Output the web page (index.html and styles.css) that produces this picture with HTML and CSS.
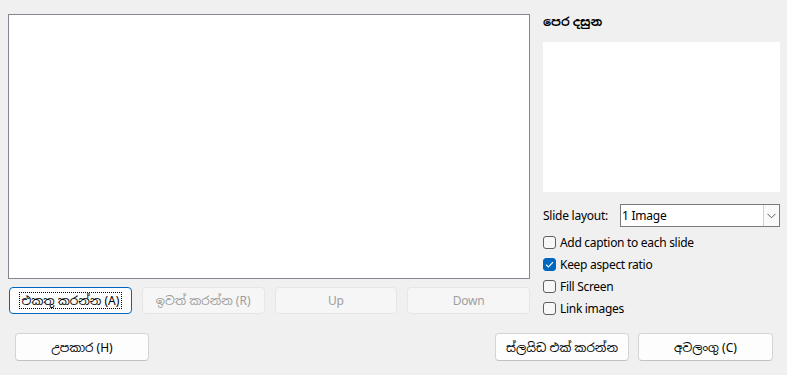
FILE: index.html
```html
<!DOCTYPE html>
<html lang="si">
<head>
<meta charset="utf-8">
<title>Slide</title>
<link rel="stylesheet" href="styles.css">
</head>
<body>
<div class="dialog">
  <div class="top">
    <div class="left">
      <div class="list"></div>
      <div class="btnrow">
        <button class="btn focused"><span class="focus">එකතු කරන්න (A)</span></button>
        <button class="btn" disabled>ඉවත් කරන්න (R)</button>
        <button class="btn latin" disabled>Up</button>
        <button class="btn latin" disabled>Down</button>
      </div>
    </div>
    <div class="right">
      <div class="preview-label">පෙර දසුන</div>
      <div class="preview"></div>
      <div class="layout-row">
        <span class="layout-label">Slide layout:</span>
        <div class="select">
          <span class="select-value">1 Image</span>
          <span class="select-btn"><svg width="9" height="6" viewBox="0 0 9 6"><path d="M0.5 0.8 L4.5 4.8 L8.5 0.8" fill="none" stroke="#5a5a5a" stroke-width="1"/></svg></span>
        </div>
      </div>
      <label class="check"><span class="box"></span>Add caption to each slide</label>
      <label class="check"><span class="box checked"><svg width="9" height="7" viewBox="0 0 9 7"><path d="M1 3.6 L3.4 6 L8 1.2" fill="none" stroke="#fff" stroke-width="1.2"/></svg></span>Keep aspect ratio</label>
      <label class="check"><span class="box"></span>Fill Screen</label>
      <label class="check"><span class="box"></span>Link images</label>
    </div>
  </div>
  <div class="bottom">
    <button class="btn wide help">උපකාර (H)</button>
    <div class="bottom-right">
      <button class="btn wide">ස්ලයිඩ එක් කරන්න</button>
      <button class="btn wide cancel">අවලංගු (C)</button>
    </div>
  </div>
</div>
</body>
</html>
```
FILE: styles.css
```css
html, body {
  margin: 0;
  padding: 0;
}
body {
  width: 787px;
  height: 375px;
  background: #f0f0f0;
  font-family: "Segoe UI", "Noto Sans", "Noto Sans Sinhala", sans-serif;
  font-size: 12px;
  color: #000;
  overflow: hidden;
}
.dialog {
  padding: 14px 0 0 8px;
  display: flex;
  flex-direction: column;
}
.top {
  display: flex;
  gap: 13px;
  height: 305px;
}
.left {
  width: 522px;
  display: flex;
  flex-direction: column;
}
.list {
  box-sizing: border-box;
  height: 265px;
  background: #fff;
  border: 1px solid #828790;
}
.btnrow {
  display: flex;
  gap: 10px;
  margin-top: 8px;
  padding-left: 1px;
}
.btn {
  box-sizing: border-box;
  width: 123px;
  height: 27px;
  background: #fdfdfd;
  border: 1px solid #d4d4d4;
  border-bottom-color: #c2c2c2;
  border-radius: 4px;
  font-family: inherit;
  font-size: 12px;
  color: #000;
  padding: 0;
  display: flex;
  align-items: center;
  justify-content: center;
}
.btn:disabled {
  background: #f6f6f6;
  border-color: #e6e6e6;
  color: #9e9e9e;
}
.btn.latin {
  letter-spacing: -0.2px;
}
.btn.focused {
  border-color: #0067c0;
  padding: 4px 9px;
}
.focus {
  flex: 1;
  align-self: stretch;
  border: 1px dotted #000;
  display: flex;
  align-items: center;
  justify-content: center;
}
.right {
  width: 237px;
  display: flex;
  flex-direction: column;
}
.preview-label {
  font-weight: bold;
  line-height: 16px;
  height: 16px;
}
.preview {
  margin-top: 12px;
  height: 150px;
  background: #fff;
}
.layout-row {
  margin-top: 12px;
  display: flex;
  align-items: center;
  height: 23px;
}
.layout-label {
  width: 77px;
  letter-spacing: -0.25px;
}
.select {
  box-sizing: border-box;
  width: 160px;
  height: 23px;
  border: 1px solid #7a7a7a;
  background: #fff;
  display: flex;
  align-items: stretch;
}
.select-value {
  flex: 1;
  padding-left: 1px;
  display: flex;
  align-items: center;
  letter-spacing: -0.25px;
}
.select-btn {
  box-sizing: border-box;
  width: 16px;
  margin: 0;
  background: #fafafa;
  border-left: 1px solid #d0d0d0;
  display: flex;
  align-items: center;
  justify-content: center;
}
.layout-row + .check {
  margin-top: 4px;
}
.check {
  display: flex;
  align-items: center;
  height: 22px;
  gap: 4px;
  letter-spacing: -0.3px;
}
.box {
  box-sizing: border-box;
  width: 13px;
  height: 13px;
  border: 1px solid #5f5f5f;
  border-radius: 3px;
  background: #f7f7f7;
  display: flex;
  align-items: center;
  justify-content: center;
}
.box.checked {
  background: #0067c0;
  border-color: #0067c0;
}
.bottom {
  margin-top: 14px;
  display: flex;
  justify-content: space-between;
  padding-left: 7px;
  width: 758px;
}
.bottom-right {
  display: flex;
  gap: 9px;
}
.btn.wide {
  width: 134px;
  height: 28px;
}
.btn.cancel {
  width: 135px;
}
```
